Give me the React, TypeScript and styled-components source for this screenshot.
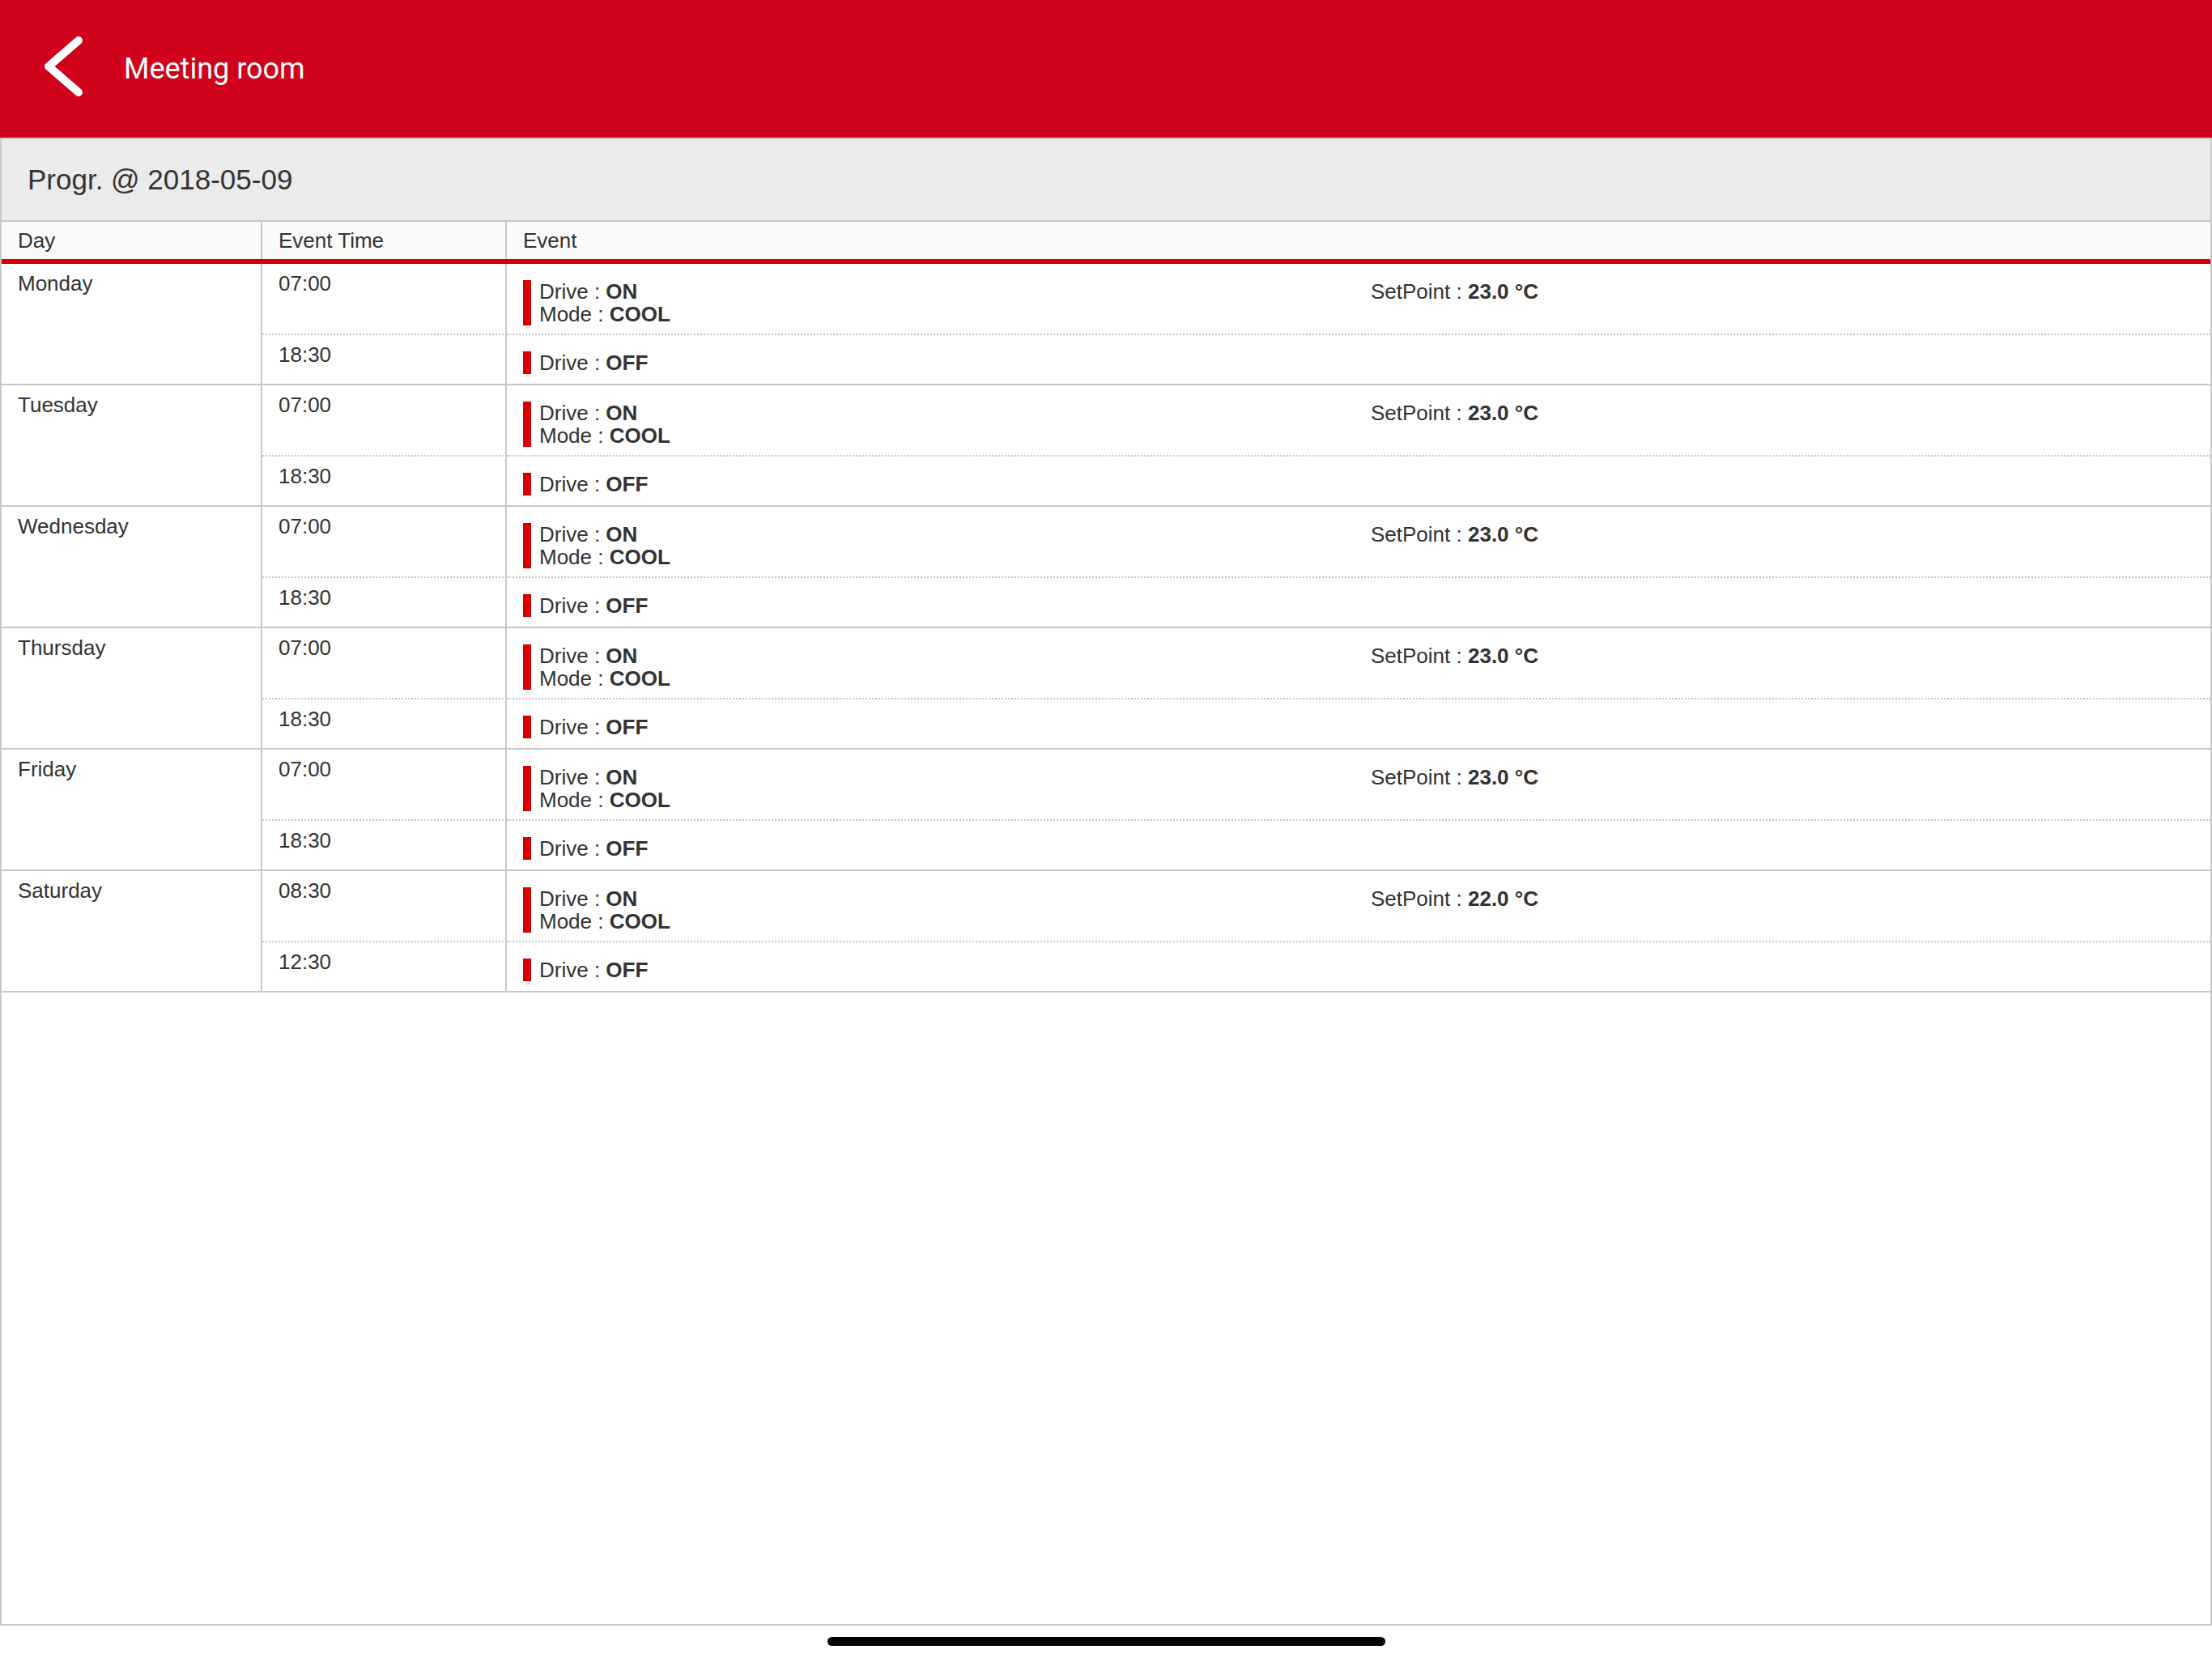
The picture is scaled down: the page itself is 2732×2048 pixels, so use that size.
import React from "react";
import styled, { createGlobalStyle } from "styled-components";

const GlobalStyle = createGlobalStyle`
    html, body {
        margin: 0;
        padding: 0;
        background: #ffffff;
    }
    body {
        font-family: "Liberation Sans", Arial, sans-serif;
        color: #333333;
    }
`;

const Screen = styled.div`
    width: 2732px;
    height: 2048px;
    display: flex;
    flex-direction: column;
    background: #ffffff;
`;

const NavBar = styled.header`
    flex: none;
    height: 170px;
    box-sizing: border-box;
    padding: 0 0 4px 50px;
    display: flex;
    align-items: center;
    gap: 43px;
    background: #d0021b;
`;

const BackIcon = styled.svg`
    display: block;
    width: 60px;
    height: 90px;
`;

const NavTitle = styled.h1`
    margin: 3px 0 0;
    font-family: Roboto, Inter, "Noto Sans", sans-serif;
    font-size: 36px;
    font-weight: 400;
    color: #ffffff;
`;

const Frame = styled.main`
    flex: 1;
    display: flex;
    flex-direction: column;
    border: 2px solid #c8c8c8;
    background: #ffffff;
`;

const ProgramTitle = styled.div`
    height: 100px;
    flex: none;
    display: flex;
    align-items: center;
    padding-left: 32px;
    background: #ebebeb;
    border-bottom: 2px solid #c8c8c8;
    font-size: 35px;
    color: #333333;
`;

const Row = styled.div`
    display: grid;
    grid-template-columns: 322px 302px 1fr;
`;

const HeaderRow = styled(Row)`
    background: #fafafa;
    border-bottom: 6px solid #d70000;
`;

const HeaderCell = styled.div<{ $divider?: boolean }>`
    box-sizing: border-box;
    padding: 9px 20px;
    font-size: 26px;
    line-height: 28px;
    border-right: ${(p) => (p.$divider ? "2px solid #c8c8c8" : "none")};
`;

const DayGroup = styled(Row)`
    border-bottom: 2px solid #c8c8c8;
`;

const DayCell = styled.div`
    grid-row: span 2;
    box-sizing: border-box;
    padding: 10px 20px;
    font-size: 26px;
    line-height: 28px;
    border-right: 2px solid #c8c8c8;
`;

const TimeCell = styled.div<{ $first?: boolean }>`
    box-sizing: border-box;
    padding: 10px 20px;
    font-size: 26px;
    line-height: 28px;
    border-right: 2px solid #c8c8c8;
    border-bottom: ${(p) => (p.$first ? "2px dotted #c8c8c8" : "none")};
`;

const EventCell = styled.div<{ $first?: boolean }>`
    box-sizing: border-box;
    padding: ${(p) => (p.$first ? "20px 20px 10px" : "20px 20px 12px")};
    border-bottom: ${(p) => (p.$first ? "2px dotted #c8c8c8" : "none")};
    display: grid;
    grid-template-columns: 1047px 1fr;
    align-items: start;
    font-size: 26px;
    line-height: 28px;
`;

const Status = styled.div`
    border-left: 10px solid #d70000;
    padding-left: 10px;
`;

const Line = styled.div`
    white-space: nowrap;
`;

const Value = styled.b`
    font-weight: 700;
`;

const Footer = styled.footer`
    flex: none;
    height: 40px;
    box-sizing: border-box;
    padding-top: 14px;
    display: flex;
    justify-content: center;
`;

const HomeIndicator = styled.div`
    width: 689px;
    height: 11px;
    border-radius: 6px;
    background: #000000;
`;

type Event = {
    time: string;
    drive: "ON" | "OFF";
    mode?: string;
    setPoint?: string;
};

type Day = {
    name: string;
    events: Event[];
};

const weekday = (on: string): Event[] => [
    { time: on, drive: "ON", mode: "COOL", setPoint: "23.0 °C" },
    { time: "18:30", drive: "OFF" },
];

const days: Day[] = [
    { name: "Monday", events: weekday("07:00") },
    { name: "Tuesday", events: weekday("07:00") },
    { name: "Wednesday", events: weekday("07:00") },
    { name: "Thursday", events: weekday("07:00") },
    { name: "Friday", events: weekday("07:00") },
    {
        name: "Saturday",
        events: [
            { time: "08:30", drive: "ON", mode: "COOL", setPoint: "22.0 °C" },
            { time: "12:30", drive: "OFF" },
        ],
    },
];

const EventRow = ({ event, first }: { event: Event; first: boolean }) => (
    <>
        <TimeCell $first={first}>{event.time}</TimeCell>
        <EventCell $first={first}>
            <Status>
                <Line>Drive : <Value>{event.drive}</Value></Line>
                {event.mode && <Line>Mode : <Value>{event.mode}</Value></Line>}
            </Status>
            {event.setPoint && (
                <Line>SetPoint : <Value>{event.setPoint}</Value></Line>
            )}
        </EventCell>
    </>
);

const App = () => {
    return (
        <Screen>
            <GlobalStyle />
            <NavBar>
                <BackIcon viewBox="0 0 60 90">
                    <polyline
                        points="47,12 10,44 47,76"
                        fill="none"
                        stroke="#ffffff"
                        strokeWidth={10}
                        strokeLinecap="round"
                        strokeLinejoin="round"
                    />
                </BackIcon>
                <NavTitle>Meeting room</NavTitle>
            </NavBar>

            <Frame>
                <ProgramTitle>Progr. @ 2018-05-09</ProgramTitle>
                <HeaderRow>
                    <HeaderCell $divider>Day</HeaderCell>
                    <HeaderCell $divider>Event Time</HeaderCell>
                    <HeaderCell>Event</HeaderCell>
                </HeaderRow>
                {days.map((day) => (
                    <DayGroup key={day.name}>
                        <DayCell>{day.name}</DayCell>
                        {day.events.map((ev, i) => (
                            <EventRow key={ev.time} event={ev} first={i === 0} />
                        ))}
                    </DayGroup>
                ))}
            </Frame>

            <Footer>
                <HomeIndicator />
            </Footer>
        </Screen>
    );
};

export default App;
